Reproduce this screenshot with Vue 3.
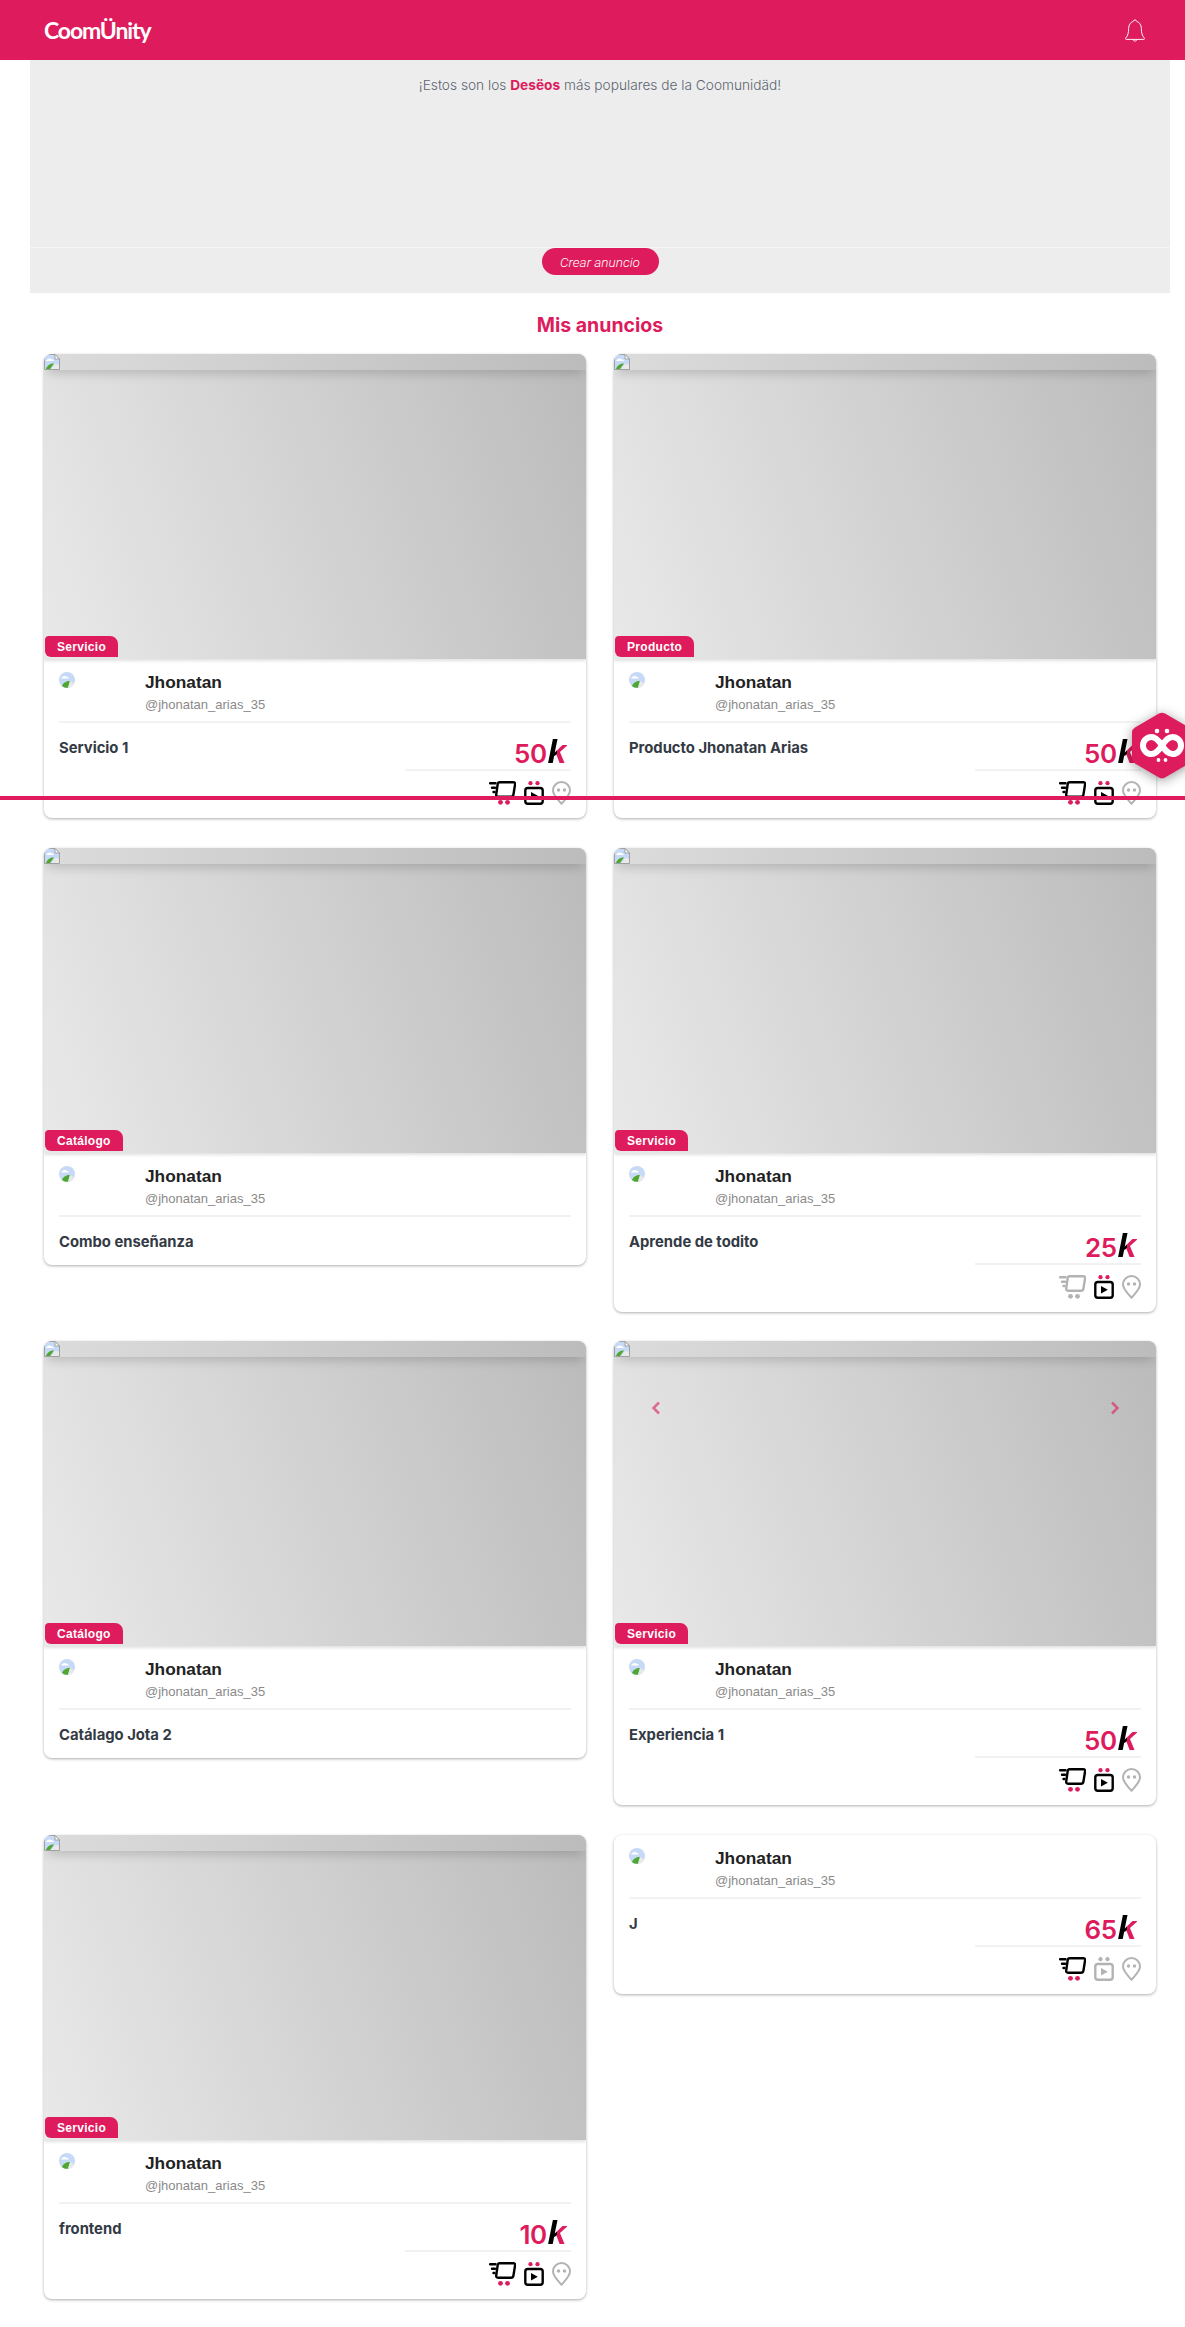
<script setup>
const cards = [
  { id: 1, tag: 'Servicio', title: 'Servicio 1', price: '50', cart: true, tv: true },
  { id: 2, tag: 'Producto', title: 'Producto Jhonatan Arias', price: '50', cart: true, tv: true },
  { id: 3, tag: 'Catálogo', title: 'Combo enseñanza' },
  { id: 4, tag: 'Servicio', title: 'Aprende de todito', price: '25', cart: false, tv: true },
  { id: 5, tag: 'Catálogo', title: 'Catálago Jota 2' },
  { id: 6, tag: 'Servicio', title: 'Experiencia 1', price: '50', cart: true, tv: true, arrows: true },
  { id: 7, tag: 'Servicio', title: 'frontend', price: '10', cart: true, tv: true },
  { id: 8, title: 'J', price: '65', cart: true, tv: false, noImage: true },
]
</script>

<template>
  <div class="page">
    <header class="topbar">
      <span class="logo">CoomÜnity</span>
      <svg class="bell" width="22" height="25" viewBox="0 0 26 28" fill="none" stroke="#fff" stroke-width="1.100">
        <path d="M13 1.500c-1 0-1.700.7-1.900 1.700C7.500 4.300 5.500 7.500 5.500 11.500c0 5-.8 8.500-3.500 11.500-.6.700-.2 1.500.6 1.500h20.800c.8 0 1.200-.8.6-1.500-2.700-3-3.500-6.500-3.500-11.500 0-4-2-7.200-5.600-8.300-.2-1-.9-1.700-1.900-1.700z" />
        <path d="M10.500 24.500c.3 1.300 1.300 2 2.500 2s2.200-.7 2.500-2" />
      </svg>
    </header>

    <section class="banner">
      <div class="banner-top">
        <p class="banner-text">¡Estos son los <b>Desëos</b> más populares de la Coomunidäd!</p>
      </div>
      <div class="banner-foot">
        <button class="create-btn">Crear anuncio</button>
      </div>
    </section>

    <h2 class="section-title">Mis anuncios</h2>

    <div class="grid">
      <article v-for="c in cards" :key="c.id" class="card">
        <div v-if="!c.noImage" class="media">
          <div class="broken-bar">
            <svg class="broken" width="16" height="16" viewBox="0 0 16 16">
              <path d="M.5.5h10.500l4.500 4.500v10.500H.5z" fill="#c6d9f7" stroke="#a0a0a0" />
              <path d="M11 .5V5h4.500z" fill="#fff" stroke="#a0a0a0" />
              <path d="M2 7c1-2 3-3 5-2 1.500 0 2.500 1 3 2z" fill="#fff" />
              <path d="M2 15c1-3.500 4-5.500 8-5.500l-4 5.500z" fill="#4fa72f" />
              <path d="M7 15l4-5 4 .5V15z" fill="#e9e9e9" />
            </svg>
          </div>
          <template v-if="c.arrows">
            <svg class="arrow left" width="10" height="14" viewBox="0 0 10 14" fill="none"><path d="M8 1.500 2.500 7 8 12.500" /></svg>
            <svg class="arrow right" width="10" height="14" viewBox="0 0 10 14" fill="none"><path d="M2 1.500 7.500 7 2 12.500" /></svg>
          </template>
          <span class="tag">{{ c.tag }}</span>
        </div>

        <div class="body">
          <div class="author">
            <span class="avatar">
              <svg width="16" height="16" viewBox="0 0 16 16">
                <circle cx="8" cy="8" r="8" fill="#c6d9f7" />
                <path d="M2 6.500c1-2 3-3 5-2 1.500 0 2.500 1 3 2z" fill="#fff" />
                <path d="M3 14c1-3 4-5 8-5l-2 6.800A8 8 0 0 1 3 14z" fill="#4fa72f" />
                <path d="M9 15.800l2-6.800 4 2.500a8 8 0 0 1-6 4.300z" fill="#e9e9e9" />
              </svg>
            </span>
            <div class="author-text">
              <div class="author-name">Jhonatan</div>
              <div class="author-handle">@jhonatan_arias_35</div>
            </div>
          </div>

          <div class="info">
            <div class="title">{{ c.title }}</div>
            <div v-if="c.price" class="pricing">
              <div class="price">{{ c.price }}<i>k</i></div>
              <div class="icons">
                <svg :class="c.cart ? 'on' : 'off'" width="27" height="24" viewBox="0 0 27 24" fill="none">
                  <path class="line" d="M10.500 1.200h13.800c1.300 0 2 .9 1.800 2.100l-1.700 10.400c-.2 1.300-1.100 2-2.400 2H9c-1.300 0-2-.9-1.800-2.100L8.700 3c.2-1.100.8-1.800 1.800-1.800z" />
                  <path class="line" d="M1 2.200h5.500M3 6.700h3M4.500 11h1" />
                  <circle class="dot" cx="11.500" cy="21.300" r="2.400" />
                  <circle class="dot" cx="18.500" cy="21.300" r="2.400" />
                </svg>
                <svg :class="c.tv ? 'on' : 'off'" width="20" height="24" viewBox="0 0 20 24" fill="none">
                  <circle class="dot" cx="6.500" cy="2.200" r="2.100" />
                  <circle class="dot" cx="13.500" cy="2.200" r="2.100" />
                  <rect class="line" x="1.300" y="7" width="17.400" height="15.700" rx="2.500" />
                  <path class="solid" d="M7 11v7.500l6.800-3.700z" />
                </svg>
                <svg class="off" width="19" height="24" viewBox="0 0 19 24" fill="none">
                  <path class="thin" d="M9.500 22.800C5.500 18 1 14 1 9.500a8.500 8.500 0 0 1 17 0c0 4.500-4.500 8.500-8.500 13.300z" />
                  <circle class="dot" cx="6.500" cy="9" r="1.700" />
                  <circle class="dot" cx="12.500" cy="9" r="1.700" />
                </svg>
              </div>
            </div>
          </div>
        </div>
      </article>
    </div>

    <div class="red-line"></div>

    <button class="float-btn">
      <svg width="60" height="67" viewBox="0 0 60 67">
        <path d="M27 1.500a6 6 0 0 1 6 0l24 14a6 6 0 0 1 3 5v26a6 6 0 0 1-3 5l-24 14a6 6 0 0 1-6 0l-24-14a6 6 0 0 1-3-5v-26a6 6 0 0 1 3-5z" fill="#de1b5c" />
        <path d="M30 33.500C26 27.500 23 25 19.500 25a8.500 8.500 0 0 0 0 17c3.500 0 6.500-2.500 10.500-8.500S36.500 25 40.500 25a8.500 8.500 0 0 1 0 17c-4 0-6.500-2.500-10.500-8.500z" fill="none" stroke="#fff" stroke-width="6" />
        <g fill="#fff">
          <circle cx="25" cy="19" r="2.300" /><circle cx="35" cy="19" r="2.300" />
          <circle cx="26.500" cy="48" r="1.900" /><circle cx="33.500" cy="48" r="1.900" />
        </g>
      </svg>
    </button>
  </div>
</template>

<style>
html, body { margin: 0; background: #fff; }
</style>

<style scoped>
.page {
  position: relative;
  width: 1185px;
  height: 2327px;
  overflow: hidden;
  font-family: "Liberation Sans", Arial, sans-serif;
}

.topbar {
  height: 60px;
  background: #de1b5c;
  display: flex;
  align-items: center;
  justify-content: space-between;
  padding: 0 39px 0 44px;
}

.logo {
  font-family: Lato, sans-serif;
  font-size: 23px;
  font-weight: 700;
  color: #fff;
  letter-spacing: -1.1px;
}

.banner {
  margin: 0 15px 0 30px;
  height: 233px;
  background: #ededed;
}

.banner-top {
  height: 187px;
  padding-top: 15px;
  box-sizing: border-box;
}

.banner-text {
  margin: 0;
  text-align: center;
  font-family: Inter, sans-serif;
  font-weight: 300;
  font-size: 13.700px;
  line-height: 20px;
  color: #5c6470;
}

.banner-text b {
  font-weight: 700;
  color: #de1b5c;
}

.banner-foot {
  display: flex;
  justify-content: center;
  border-top: 1px solid #f5f5f5;
}

.create-btn {
  width: 117px;
  height: 27px;
  border: 0;
  border-radius: 14px;
  background: #de1b5c;
  color: #fff;
  font-family: Roboto, sans-serif;
  font-weight: 300;
  font-style: italic;
  font-size: 13.500px;
  padding: 0;
}

.section-title {
  margin: 20px 0 17px 15px;
  text-align: center;
  font-family: Inter, sans-serif;
  font-size: 19.500px;
  line-height: 24px;
  font-weight: 700;
  color: #de1b5c;
}

.grid {
  display: grid;
  grid-template-columns: 542px 542px;
  column-gap: 28px;
  row-gap: 29.500px;
  align-items: start;
  padding-left: 44px;
}

.card {
  background: #fff;
  border-radius: 8px;
  box-shadow: 0 1px 3px rgba(0, 0, 0, 0.32);
  overflow: hidden;
}

.media {
  position: relative;
  height: 305px;
  background: linear-gradient(72deg, #e9e9e9, #bbbbbb);
  box-shadow: 0 2px 3px rgba(0, 0, 0, 0.12);
}

.broken-bar {
  height: 16px;
  background: linear-gradient(95deg, #dcdcdc, #bcbcbc);
  box-shadow: 0 5px 12px -3px rgba(0, 0, 0, 0.22);
  border-radius: 8px 8px 0 0;
}

.broken {
  display: block;
}

.arrow {
  position: absolute;
  top: 60px;
  stroke: #de1b5c;
  stroke-width: 2.500;
  opacity: 0.6;
}

.arrow.left { left: 37px; }
.arrow.right { right: 36px; }

.tag {
  position: absolute;
  left: 1px;
  bottom: 2px;
  height: 21px;
  padding: 0 12px 0 12px;
  border-radius: 4px 8px 0 6px;
  background: #de1b5c;
  color: #fff;
  font-size: 12px;
  font-weight: 700;
  line-height: 22px;
  letter-spacing: 0.3px;
}

.body {
  padding: 13px 15px 0;
}

.author {
  display: flex;
  align-items: flex-start;
  height: 49px;
  border-bottom: 2px solid #f2f2f2;
}

.avatar {
  width: 86px;
  flex: none;
}

.avatar svg {
  display: block;
}

.author-name {
  font-size: 17.300px;
  font-weight: 700;
  line-height: 20px;
  color: #222;
}

.author-handle {
  margin-top: 5px;
  font-size: 13px;
  line-height: 16px;
  color: #8a8a8a;
}

.info {
  display: flex;
  justify-content: space-between;
  align-items: flex-start;
  min-height: 48px;
}

.title {
  padding-top: 15px;
  font-family: Inter, sans-serif;
  font-size: 14.800px;
  font-weight: 700;
  line-height: 20px;
  color: #333a44;
}

.pricing {
  width: 166px;
  padding-bottom: 13px;
}

.price {
  height: 48px;
  box-sizing: border-box;
  border-bottom: 2px solid #f2f2f2;
  text-align: right;
  padding: 12px 4px 0 0;
  font-family: Inter, sans-serif;
  font-size: 26px;
  line-height: 32px;
  font-weight: 600;
  letter-spacing: -0.5px;
  color: #de1b5c;
}

.price i {
  font-family: "Liberation Sans", sans-serif;
  font-weight: 700;
  font-size: 34px;
  line-height: 32px;
  margin-left: 1px;
  padding-right: 1px;
  color: transparent;
  background: linear-gradient(100deg, #000 48%, #de1b5c 48%);
  -webkit-background-clip: text;
  background-clip: text;
}

.icons {
  display: flex;
  justify-content: flex-end;
  align-items: flex-end;
  gap: 8px;
  padding-top: 8px;
  height: 26px;
}

.icons svg { display: block; }

.line, .thin {
  stroke-linecap: round;
  stroke-linejoin: round;
}

.line { stroke-width: 2.400; }
.thin { stroke-width: 2; stroke: #b3b3b3; }
.solid { fill: #000; }

.on .line { stroke: #000; }
.on .dot { fill: #de1b5c; }
.off .line { stroke: #b3b3b3; }
.off .dot { fill: #b3b3b3; }
.off .solid { fill: #b3b3b3; }

.red-line {
  position: absolute;
  left: 0;
  right: 0;
  top: 796px;
  height: 4px;
  background: #de1b5c;
}

.float-btn {
  position: absolute;
  top: 712px;
  left: 1132px;
  padding: 0;
  border: 0;
  background: none;
  filter: drop-shadow(0 2px 6px rgba(0, 0, 0, 0.4));
}

.float-btn svg { display: block; }
</style>
